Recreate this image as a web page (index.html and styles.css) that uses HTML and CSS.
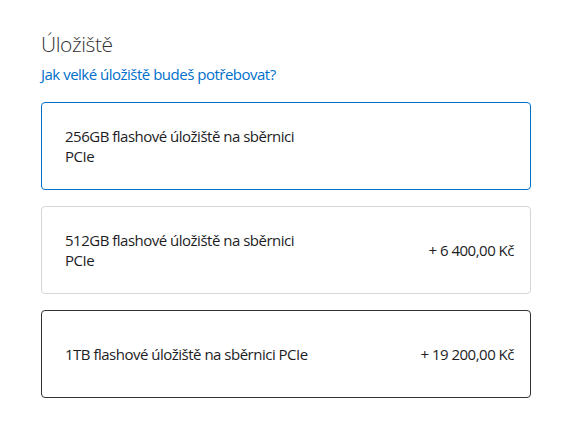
FILE: index.html
```html
<!DOCTYPE html>
<html lang="cs">
<head>
<meta charset="utf-8">
<link rel="stylesheet" href="styles.css">
</head>
<body>
<section class="storage">
  <h2 class="title">Úložiště</h2>
  <a class="help" href="#">Jak velké úložiště budeš potřebovat?</a>
  <div class="options">
    <div class="option selected">
      <span class="name">256GB flashové úložiště na sběrnici PCIe</span>
    </div>
    <div class="option">
      <span class="name">512GB flashové úložiště na sběrnici PCIe</span>
      <span class="price">+ 6 400,00 Kč</span>
    </div>
    <div class="option focused">
      <span class="name">1TB flashové úložiště na sběrnici PCIe</span>
      <span class="price">+ 19 200,00 Kč</span>
    </div>
  </div>
</section>
</body>
</html>
```
FILE: styles.css
```css
html, body {
  margin: 0;
  padding: 0;
  background: #fff;
}
body {
  font-family: "Open Sans", "Noto Sans", sans-serif;
  color: #333;
}
.storage {
  padding: 29px 53px 0 41px;
  display: flex;
  flex-direction: column;
}
.title {
  margin: 0;
  font-weight: 300;
  font-size: 21px;
  line-height: 30px;
  color: #333;
  letter-spacing: -0.4px;
}
.help {
  margin-top: 5px;
  font-size: 15px;
  line-height: 20px;
  color: #0070c9;
  text-decoration: none;
  letter-spacing: -0.5px;
}
.options {
  margin-top: 18px;
  display: flex;
  flex-direction: column;
  gap: 16px;
}
.option {
  box-sizing: border-box;
  height: 88px;
  border: 1px solid #d6d6d6;
  border-radius: 4px;
  padding: 0 16px 0 23px;
  display: flex;
  align-items: center;
  justify-content: space-between;
  font-size: 15px;
  line-height: 20px;
  color: #1d1d1f;
  letter-spacing: -0.5px;
}
.option.selected {
  border-color: #0070c9;
}
.option.focused {
  border-color: #333;
}
.name {
  width: 248px;
}
.price {
  white-space: nowrap;
}
```
